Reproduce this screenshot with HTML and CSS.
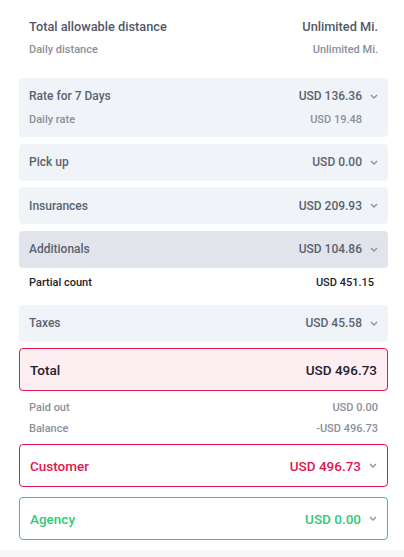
FILE: index.html
```html
<!DOCTYPE html>
<html>
<head>
    <title>Summary</title>
    <link rel="stylesheet" href="styles.css">
</head>
<body>
    <div class="summary">
        <div class="distance">
            <div class="row main">
                <span>Total allowable distance</span>
                <span>Unlimited Mi.</span>
            </div>
            <div class="row sub">
                <span>Daily distance</span>
                <span>Unlimited Mi.</span>
            </div>
        </div>

        <div class="box rate">
            <div class="row">
                <span>Rate for 7 Days</span>
                <span class="value">USD 136.36 <svg class="chev" viewBox="0 0 8 5"><path d="M1 1l3 3 3-3"/></svg></span>
            </div>
            <div class="row sub">
                <span>Daily rate</span>
                <span class="value">USD 19.48 <i class="chev-space"></i></span>
            </div>
        </div>

        <div class="box">
            <span>Pick up</span>
            <span class="value">USD 0.00 <svg class="chev" viewBox="0 0 8 5"><path d="M1 1l3 3 3-3"/></svg></span>
        </div>

        <div class="box">
            <span>Insurances</span>
            <span class="value">USD 209.93 <svg class="chev" viewBox="0 0 8 5"><path d="M1 1l3 3 3-3"/></svg></span>
        </div>

        <div class="box active">
            <span>Additionals</span>
            <span class="value">USD 104.86 <svg class="chev" viewBox="0 0 8 5"><path d="M1 1l3 3 3-3"/></svg></span>
        </div>

        <div class="partial">
            <span>Partial count</span>
            <span>USD 451.15</span>
        </div>

        <div class="box">
            <span>Taxes</span>
            <span class="value">USD 45.58 <svg class="chev" viewBox="0 0 8 5"><path d="M1 1l3 3 3-3"/></svg></span>
        </div>

        <div class="total">
            <span>Total</span>
            <span>USD 496.73</span>
        </div>

        <div class="payments">
            <div class="row sub">
                <span>Paid out</span>
                <span>USD 0.00</span>
            </div>
            <div class="row sub">
                <span>Balance</span>
                <span>-USD 496.73</span>
            </div>
        </div>

        <div class="party customer">
            <span>Customer</span>
            <span class="value">USD 496.73 <svg class="chev" viewBox="0 0 8 5"><path d="M1 1l3 3 3-3"/></svg></span>
        </div>

        <div class="party agency">
            <span>Agency</span>
            <span class="value">USD 0.00 <svg class="chev" viewBox="0 0 8 5"><path d="M1 1l3 3 3-3"/></svg></span>
        </div>
    </div>
    <div class="footer"></div>
</body>
</html>
```

FILE: styles.css
```css
body {
    font-family: Roboto, "Liberation Sans", Arial, sans-serif;
    background: #fff;
    margin: 0;
    padding: 0;
    color: #596170;
}

.summary {
    padding: 17px 16px 0 19px;
    display: flex;
    flex-direction: column;
}

.row,
.box,
.partial,
.total,
.party {
    display: flex;
    justify-content: space-between;
    align-items: center;
}

.value {
    display: flex;
    align-items: center;
}

.chev {
    width: 8px;
    height: 5px;
    margin-left: 8px;
    fill: none;
    stroke: #8b93a2;
    stroke-width: 1.4;
}

.chev-space {
    display: inline-block;
    width: 16px;
}

.distance {
    padding: 0 10px;
    margin-bottom: 21px;
}

.row {
    height: 18px;
    font-size: 12px;
}

.main {
    font-size: 12.75px;
    font-weight: 500;
    color: #525966;
}

.row.sub {
    font-size: 11px;
    color: #8a909b;
    height: 16px;
    margin-top: 6px;
    font-weight: 500;
}

.box {
    background: #f0f3f7;
    border-radius: 4px;
    padding: 0 10px;
    height: 37px;
    font-size: 12px;
    font-weight: 500;
    margin-bottom: 6.5px;
    color: #5b6370;
}

.box.rate {
    display: block;
    height: auto;
    padding: 9px 10px 10px;
}

.box.active {
    background: #e1e5eb;
}

.partial {
    padding: 0 14px 0 10px;
    font-size: 11px;
    font-weight: 500;
    color: #1e222a;
    height: 16px;
    margin: 0.5px 0 14px;
}

.total {
    height: 41px;
    border: 1px solid #e0164f;
    background: #fdeef2;
    border-radius: 4px;
    padding: 0 10px;
    font-size: 13.5px;
    font-weight: 500;
    color: #1c2230;
}

.payments {
    padding: 0 10px;
    margin: 3px 0 8px;
}

.payments .row.sub {
    margin-top: 5px;
}

.party {
    height: 41px;
    border: 1px solid;
    border-radius: 4px;
    padding: 0 10px;
    font-size: 13.5px;
    font-weight: 500;
    margin-bottom: 10px;
}

.customer {
    border-color: #e0164f;
    color: #e0164f;
}

.agency {
    border-color: #33c97b;
    color: #33c97b;
}

.footer {
    height: 8px;
    background: #f7f7f8;
}
```
